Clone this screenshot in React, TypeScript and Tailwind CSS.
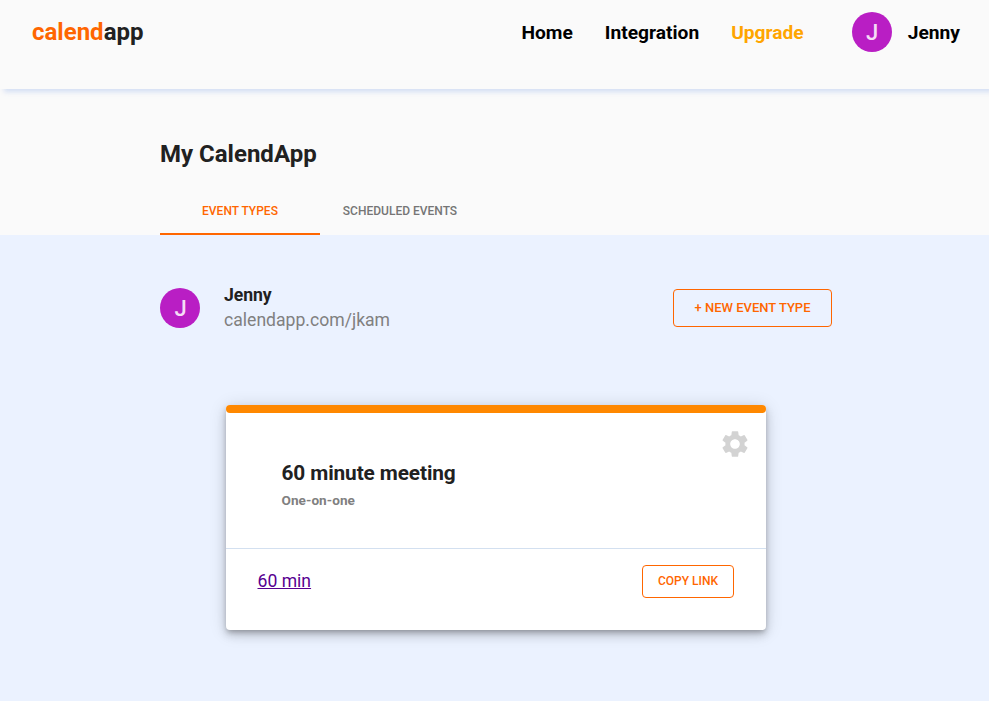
import React from "react";
import { MdSettings } from "react-icons/md";

const tabs = ["EVENT TYPES", "SCHEDULED EVENTS"];

function Avatar() {
  return (
    <div className="flex size-10 shrink-0 items-center justify-center rounded-full bg-[#b91ec4] pt-px pl-px text-[22px] leading-none font-medium text-[#f5dcf6]">
      J
    </div>
  );
}

export default function App() {
  return (
    <div className="flex h-[701px] w-full flex-col overflow-hidden bg-[#ebf2ff] font-['Roboto',sans-serif] text-[#212121]">
      <header className="z-10 flex h-[89px] shrink-0 items-start justify-between bg-[#fafafa] pl-8 pr-[29px] pt-3 shadow-[4px_3px_5px_rgba(190,208,240,0.65)]">
        <div className="text-2xl leading-10 font-bold">
          <span className="text-[#ff6600]">calend</span>app
        </div>
        <nav className="flex items-start text-[19.2px] leading-[41px] font-bold text-black">
          <a className="mr-8">Home</a>
          <a className="mr-8">Integration</a>
          <a className="mr-12 text-[#ffa500]">Upgrade</a>
          <Avatar />
          <span className="ml-4">Jenny</span>
        </nav>
      </header>
      <section className="h-[146px] shrink-0 bg-[#fafafa] pl-40 pt-[49px]">
        <h1 className="text-2xl leading-8 font-bold">My CalendApp</h1>
        <div className="mt-[17px] flex text-[12px] font-medium">
          {tabs.map((tab, i) => (
            <div key={tab} className={i === 0 ? "flex h-12 w-40 items-center justify-center border-b-2 border-[#ff6600] pt-0.5 text-[#ff6600]" : "flex h-12 w-40 items-center justify-center border-b-2 border-transparent pt-0.5 text-[#757575]"}>
              {tab}
            </div>
          ))}
        </div>
      </section>
      <main className="pl-40 pt-12">
        <div className="flex h-[50px] w-[672px] items-center">
          <Avatar />
          <div className="ml-6 text-[17.6px] leading-[25px]">
            <div className="font-bold tracking-[-0.05px]">Jenny</div>
            <div className="text-[#808080]">calendapp.com/jkam</div>
          </div>
          <button className="ml-auto h-[38px] w-[159px] rounded border border-[#ff6600] text-[13px] font-medium text-[#ff6600]">+ NEW EVENT TYPE</button>
        </div>
        <article className="mt-[72px] ml-[66px] h-[225px] w-[540px] rounded bg-white shadow-[0_3px_5px_-1px_rgba(0,0,0,0.22),0_5px_10px_rgba(0,0,0,0.16),0_2px_18px_rgba(0,0,0,0.14)]">
          <div className="h-2 rounded bg-[#ff8800]" />
          <div className="flex h-[136px] justify-between border-b border-[#d3e0f0] pl-[55.5px] pr-[15px] pt-[15px]">
            <div className="pt-[31px]">
              <h2 className="text-[20.8px] leading-7 font-bold tracking-[-0.1px]">60 minute meeting</h2>
              <p className="mt-[3px] text-[13.6px] leading-5 font-bold tracking-[0.05px] text-[#808080]">One-on-one</p>
            </div>
            <MdSettings className="size-8 text-[#d3d3d3]" />
          </div>
          <div className="flex items-start justify-between pl-[31.5px] pr-8 pt-4">
            <a className="text-[17.6px] leading-8 text-[#580090] underline">60 min</a>
            <button className="h-[33px] w-[92px] rounded border border-[#ff6600] pb-px text-xs font-medium text-[#ff6600]">COPY LINK</button>
          </div>
        </article>
      </main>
    </div>
  );
}
